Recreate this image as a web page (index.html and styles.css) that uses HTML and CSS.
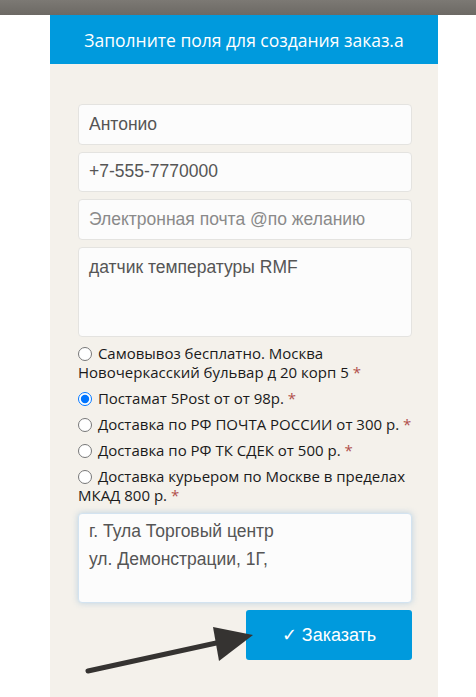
FILE: index.html
```html
<!DOCTYPE html>
<html lang="ru">
<head>
<meta charset="utf-8">
<link rel="stylesheet" href="styles.css">
</head>
<body>
<div class="topbar"></div>
<div class="panel">
  <div class="panel-head">Заполните поля для создания заказ.а</div>
  <form class="order-form">
    <input class="field" type="text" value="Антонио">
    <input class="field" type="text" value="+7-555-7770000">
    <input class="field" type="text" placeholder="Электронная почта @по желанию">
    <textarea class="area">датчик температуры RMF</textarea>
    <div class="options">
      <label class="opt"><input type="radio" name="d"> Самовывоз бесплатно. Москва Новочеркасский бульвар д 20 корп 5 <span class="req">*</span></label>
      <label class="opt"><input type="radio" name="d" checked> Постамат 5Post от от 98р. <span class="req">*</span></label>
      <label class="opt"><input type="radio" name="d"> Доставка по РФ ПОЧТА РОССИИ от 300 р. <span class="req">*</span></label>
      <label class="opt"><input type="radio" name="d"> Доставка по РФ ТК СДЕК от 500 р. <span class="req">*</span></label>
      <label class="opt"><input type="radio" name="d"> Доставка курьером по Москве в пределах МКАД 800 р. <span class="req">*</span></label>
    </div>
    <textarea class="area focus">г. Тула Торговый центр
ул. Демонстрации, 1Г,</textarea>
    <div class="actions">
      <button class="submit" type="button">✓ Заказать</button>
    </div>
    <svg class="arrow" width="180" height="60" viewBox="0 0 180 60">
      <line x1="8" y1="51" x2="150" y2="20" stroke="#353331" stroke-width="5" stroke-linecap="round"/>
      <polygon points="133,7 173,15 139,41" fill="#353331"/>
    </svg>
  </form>
</div>
</body>
</html>
```
FILE: styles.css
```css
* { box-sizing: border-box; }
html, body { margin: 0; padding: 0; }
body {
  background: #ffffff;
  height: 697px;
  overflow: hidden;
  font-family: "Open Sans", "Noto Sans", sans-serif;
}
.topbar {
  height: 15px;
  background: linear-gradient(#7c7974, #6c6964);
}
.panel {
  width: 388px;
  margin-left: 50px;
  background: #f4f1eb;
  height: 682px;
}
.panel-head {
  height: 49px;
  background: #009add;
  color: #ffffff;
  font-size: 17.5px;
  display: flex;
  align-items: center;
  justify-content: center;
  padding-top: 1px;
}
.order-form {
  position: relative;
  padding: 40px 26px 0 28px;
  display: flex;
  flex-direction: column;
}
.field, .area {
  display: block;
  width: 334px;
  background: #fcfcfc;
  border: 1px solid #e4e3e0;
  border-radius: 4px;
  font-family: "Liberation Sans", Arial, sans-serif;
  font-size: 17.5px;
  color: #555555;
  padding: 0 10px;
  outline: none;
  margin: 0;
}
.field {
  height: 40.5px;
  margin-bottom: 7px;
}
.field::placeholder { color: #8a8a8a; }
.area {
  height: 90px;
  resize: none;
  line-height: 28px;
  padding-top: 5px;
}
.area.focus {
  border-color: #d3e3f0;
  box-shadow: 0 0 6px rgba(120, 170, 210, 0.45);
  padding-top: 3px;
}
.options {
  padding: 7px 0 8px;
  display: flex;
  flex-direction: column;
  gap: 7px;
  font-size: 15px;
  line-height: 19px;
  color: #1a1a1a;
}
.opt { display: block; }
.opt input {
  margin: 0 2px 0 0;
  width: 14px;
  height: 14px;
  vertical-align: -2px;
}
.req { color: #b1504b; }
.actions {
  display: flex;
  justify-content: flex-end;
  padding-top: 7px;
}
.submit {
  width: 166px;
  height: 50px;
  background: #009add;
  border: none;
  border-radius: 3px;
  color: #ffffff;
  font-family: "Liberation Sans", Arial, sans-serif;
  font-size: 18px;
}
.arrow {
  position: absolute;
  left: 30px;
  top: 556px;
}
```
